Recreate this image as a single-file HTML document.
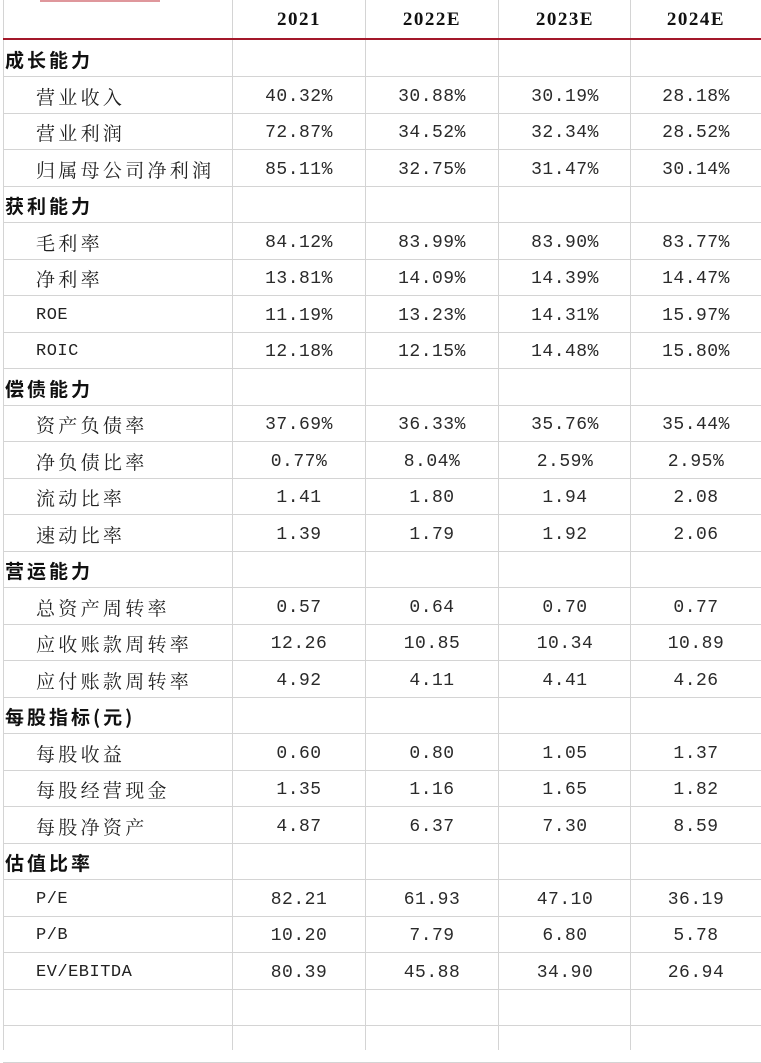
<!DOCTYPE html>
<html><head><meta charset="utf-8"><style>
body{margin:0;width:761px;height:1050px;overflow:hidden;background:#fff;position:relative;font-family:"Liberation Serif","Noto Serif CJK SC",serif;color:#1a1a1a}
.vl{position:absolute;top:0;height:1050px;width:1px;background:#d4d4d4}
.hl{position:absolute;left:3px;width:758px;height:1px;background:#d4d4d4}
.red{position:absolute;left:3px;top:38px;width:758px;height:2px;background:#a3182a}
.row{position:absolute;left:0;width:761px;height:36.5px}
.row div{position:absolute;top:2px;line-height:36.5px;white-space:nowrap}
.sec{left:5px;font-weight:bold;font-size:19px;letter-spacing:3px;font-family:"Noto Sans CJK SC",sans-serif;color:#111}
.lab{left:36px;font-size:19px;letter-spacing:3.3px;font-family:"Noto Serif CJK SC",serif;color:#222}
.labl{left:36px;font-size:17px;font-family:"Liberation Mono",monospace;letter-spacing:0.5px;color:#222}
.n{font-family:"Liberation Mono",monospace;font-size:18px;text-align:center;letter-spacing:0.5px;color:#2a2a2a}
.c1{left:233px;width:132px}.c2{left:366px;width:132px}.c3{left:499px;width:132px}.c4{left:631px;width:130px}
.h{font-weight:bold;font-family:"Liberation Serif",serif;font-size:19px;letter-spacing:1.5px;color:#111}
</style></head><body>
<div style="position:absolute;left:40px;top:0;width:120px;height:2px;background:#c0303a;opacity:.5"></div>
<div class="vl" style="left:3px"></div>
<div class="vl" style="left:232px"></div>
<div class="vl" style="left:365px"></div>
<div class="vl" style="left:498px"></div>
<div class="vl" style="left:630px"></div>
<div class="row" style="top:2px;height:36px"><div class="n h c1" style="line-height:36px;top:0">2021</div><div class="n h c2" style="line-height:36px;top:0">2022E</div><div class="n h c3" style="line-height:36px;top:0">2023E</div><div class="n h c4" style="line-height:36px;top:0">2024E</div></div>
<div class="red"></div>
<div id="rows"></div>
<script>
var d=[["s","成长能力"],["l","营业收入","40.32%","30.88%","30.19%","28.18%"],["l","营业利润","72.87%","34.52%","32.34%","28.52%"],["l","归属母公司净利润","85.11%","32.75%","31.47%","30.14%"],["s","获利能力"],["l","毛利率","84.12%","83.99%","83.90%","83.77%"],["l","净利率","13.81%","14.09%","14.39%","14.47%"],["e","ROE","11.19%","13.23%","14.31%","15.97%"],["e","ROIC","12.18%","12.15%","14.48%","15.80%"],["s","偿债能力"],["l","资产负债率","37.69%","36.33%","35.76%","35.44%"],["l","净负债比率","0.77%","8.04%","2.59%","2.95%"],["l","流动比率","1.41","1.80","1.94","2.08"],["l","速动比率","1.39","1.79","1.92","2.06"],["s","营运能力"],["l","总资产周转率","0.57","0.64","0.70","0.77"],["l","应收账款周转率","12.26","10.85","10.34","10.89"],["l","应付账款周转率","4.92","4.11","4.41","4.26"],["s","每股指标(元)"],["l","每股收益","0.60","0.80","1.05","1.37"],["l","每股经营现金","1.35","1.16","1.65","1.82"],["l","每股净资产","4.87","6.37","7.30","8.59"],["s","估值比率"],["e","P/E","82.21","61.93","47.10","36.19"],["e","P/B","10.20","7.79","6.80","5.78"],["e","EV/EBITDA","80.39","45.88","34.90","26.94"],["b"],["b"]];
var h="";
for(var i=0;i<d.length;i++){var t=40+i*36.5,r=d[i];
h+='<div class="row" style="top:'+t+'px">';
if(r[0]=="s")h+='<div class="sec">'+r[1]+'</div>';
if(r[0]=="l")h+='<div class="lab">'+r[1]+'</div>';
if(r[0]=="e")h+='<div class="labl">'+r[1]+'</div>';
if(r.length>2)for(var j=1;j<=4;j++)h+='<div class="n c'+j+'">'+r[j+1]+'</div>';
h+='</div><div class="hl" style="top:'+(t+36)+'px"></div>';}
document.getElementById("rows").innerHTML=h;
</script>
</body></html>
